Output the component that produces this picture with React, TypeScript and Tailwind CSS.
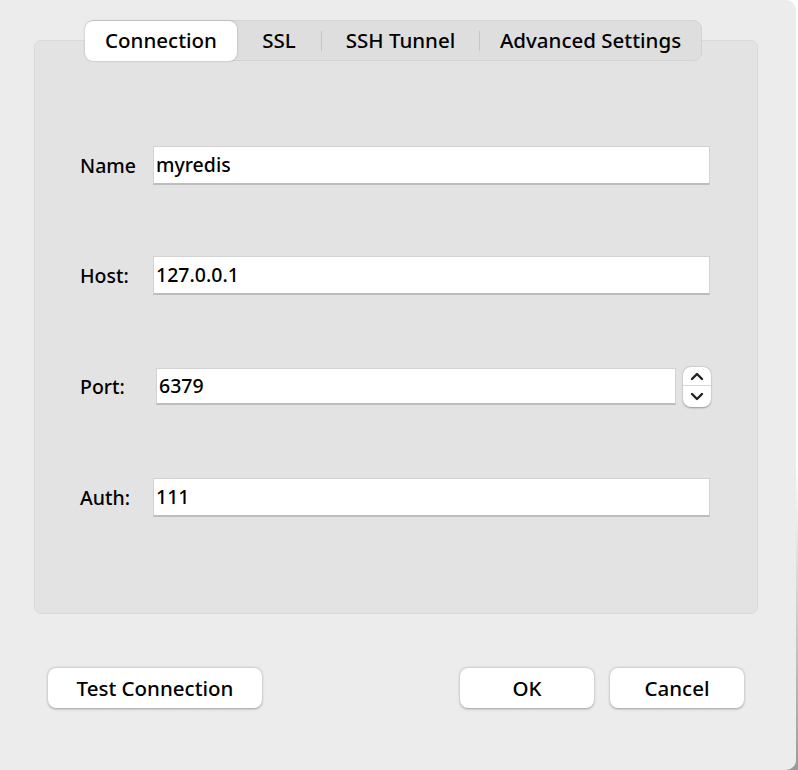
import React from "react";

const font = { fontFamily: '"Noto Sans", "DejaVu Sans", sans-serif' };

function Field({ label, value }: { label: string; value: string }) {
  return (
    <div className="flex items-center h-[39px]">
      <div className="w-[73px] text-[19.5px] font-medium text-black">{label}</div>
      <div className="w-[557px] h-[39px] bg-white border border-[#d2d2d2] border-b-2 border-b-[#bdbdbd] flex items-center pl-[2px] text-[19.5px] font-medium text-black">
        {value}
      </div>
    </div>
  );
}

export default function App() {
  return (
    <div className="w-[798px] h-[770px] bg-[linear-gradient(#ffffff,#ffffff_60%,#9a9a9a)] overflow-hidden" style={font}>
      <div className="w-[796px] h-[770px] bg-[#ececec] rounded-r-[10px] flex flex-col pt-[20px] pl-[34px] pr-[38px]">
        <div className="flex pl-[51px] relative z-10">
          <div className="flex h-[41px] bg-[#dedede] border border-[#d3d3d3] rounded-[9px] items-center text-[20.5px] font-medium text-black">
            <div className="w-[152px] h-[40px] -ml-px bg-white rounded-[8px] shadow-[0_0_2px_rgba(0,0,0,0.3)] flex items-center justify-center">
              Connection
            </div>
            <div className="w-[84px] flex items-center justify-center">SSL</div>
            <div className="w-px h-[20px] bg-[#c6c6c6]" />
            <div className="w-[157px] flex items-center justify-center">SSH Tunnel</div>
            <div className="w-px h-[20px] bg-[#c6c6c6]" />
            <div className="w-[221px] flex items-center justify-center">Advanced Settings</div>
          </div>
        </div>
        <div className="-mt-[21px] h-[574px] bg-[#e3e3e3] border border-[#d9d9d9] rounded-[7px] pt-[105px] pl-[45px] flex flex-col">
          <Field label="Name" value="myredis" />
          <div className="mt-[71px]">
            <Field label="Host:" value="127.0.0.1" />
          </div>
          <div className="mt-[71px] flex items-start h-[41px]">
            <div className="w-[76px] h-[41px] flex items-center text-[19.5px] font-medium text-black">Port:</div>
            <div className="mt-[2px] w-[520px] h-[37px] bg-white border border-[#d2d2d2] border-b-2 border-b-[#bdbdbd] flex items-center pl-[2px] text-[19.5px] font-medium text-black">
              6379
            </div>
            <div className="mt-[1px] ml-[7px] w-[28px] h-[40px] bg-white rounded-[8px] shadow-[0_0.5px_2px_rgba(0,0,0,0.35)] flex flex-col items-center">
              <div className="h-[19px] w-full flex items-center justify-center border-b border-[#d8d8d8]">
                <svg width="14" height="9" viewBox="0 0 14 9">
                  <path d="M2 7 L7 2 L12 7" fill="none" stroke="#222" strokeWidth="2.4" strokeLinecap="round" strokeLinejoin="round" />
                </svg>
              </div>
              <div className="h-[20px] w-full flex items-center justify-center">
                <svg width="14" height="9" viewBox="0 0 14 9">
                  <path d="M2 2 L7 7 L12 2" fill="none" stroke="#222" strokeWidth="2.4" strokeLinecap="round" strokeLinejoin="round" />
                </svg>
              </div>
            </div>
          </div>
          <div className="mt-[71px]">
            <Field label="Auth:" value="111" />
          </div>
        </div>
        <div className="mt-[54px] flex items-center pl-[14px] pr-[14px] text-[20.5px] font-medium text-black">
          <button className="w-[214px] h-[40px] bg-white rounded-[8px] shadow-[0_0.5px_2.5px_rgba(0,0,0,0.35)] flex items-center justify-center">
            Test Connection
          </button>
          <div className="flex-1" />
          <button className="w-[134px] h-[40px] bg-white rounded-[8px] shadow-[0_0.5px_2.5px_rgba(0,0,0,0.35)] flex items-center justify-center">
            OK
          </button>
          <button className="ml-[16px] w-[134px] h-[40px] bg-white rounded-[8px] shadow-[0_0.5px_2.5px_rgba(0,0,0,0.35)] flex items-center justify-center">
            Cancel
          </button>
        </div>
      </div>
    </div>
  );
}
